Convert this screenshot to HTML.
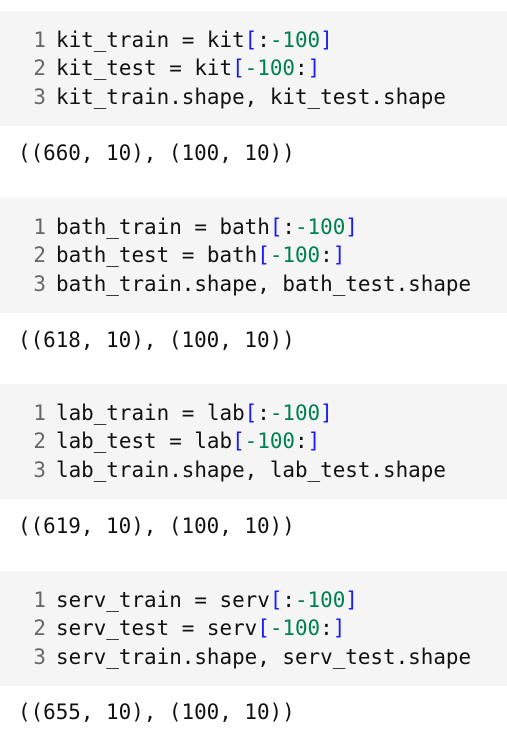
<!DOCTYPE html>
<html><head><style>
body{margin:0;width:507px;height:743px;background:#fff;position:relative;overflow:hidden;font-family:"DejaVu Sans Mono","Liberation Mono",monospace;font-size:20.9px;color:#111}
.blk{position:absolute;left:0;width:507px;height:115px;background:#f5f5f5}
.ln{position:absolute;left:0;height:28px;line-height:28px;white-space:pre;font-family:"DejaVu Sans Mono",monospace;font-size:20.9px;letter-spacing:0px}
.n{color:#666;display:inline-block;width:56px;text-align:right}
.n span{margin-right:10px}
.b{color:#1a1aff}.g{color:#008050}
.out{position:absolute;left:18px;height:28px;line-height:28px;white-space:pre}
</style></head><body>

<div class="blk" style="top:11px"></div>
<div class="ln" style="top:26px"><span class="n"><span>1</span></span>kit_train = kit<span class="b">[</span>:<span class="g">-100</span><span class="b">]</span></div>
<div class="ln" style="top:54px"><span class="n"><span>2</span></span>kit_test = kit<span class="b">[</span><span class="g">-100</span>:<span class="b">]</span></div>
<div class="ln" style="top:83px"><span class="n"><span>3</span></span>kit_train.shape, kit_test.shape</div>
<div class="out" style="top:139px">((660, 10), (100, 10))</div>

<div class="blk" style="top:198px"></div>
<div class="ln" style="top:213px"><span class="n"><span>1</span></span>bath_train = bath<span class="b">[</span>:<span class="g">-100</span><span class="b">]</span></div>
<div class="ln" style="top:241px"><span class="n"><span>2</span></span>bath_test = bath<span class="b">[</span><span class="g">-100</span>:<span class="b">]</span></div>
<div class="ln" style="top:270px"><span class="n"><span>3</span></span>bath_train.shape, bath_test.shape</div>
<div class="out" style="top:326px">((618, 10), (100, 10))</div>

<div class="blk" style="top:384px"></div>
<div class="ln" style="top:399px"><span class="n"><span>1</span></span>lab_train = lab<span class="b">[</span>:<span class="g">-100</span><span class="b">]</span></div>
<div class="ln" style="top:427px"><span class="n"><span>2</span></span>lab_test = lab<span class="b">[</span><span class="g">-100</span>:<span class="b">]</span></div>
<div class="ln" style="top:456px"><span class="n"><span>3</span></span>lab_train.shape, lab_test.shape</div>
<div class="out" style="top:512px">((619, 10), (100, 10))</div>

<div class="blk" style="top:571px"></div>
<div class="ln" style="top:586px"><span class="n"><span>1</span></span>serv_train = serv<span class="b">[</span>:<span class="g">-100</span><span class="b">]</span></div>
<div class="ln" style="top:614px"><span class="n"><span>2</span></span>serv_test = serv<span class="b">[</span><span class="g">-100</span>:<span class="b">]</span></div>
<div class="ln" style="top:643px"><span class="n"><span>3</span></span>serv_train.shape, serv_test.shape</div>
<div class="out" style="top:698px">((655, 10), (100, 10))</div>

</body></html>
